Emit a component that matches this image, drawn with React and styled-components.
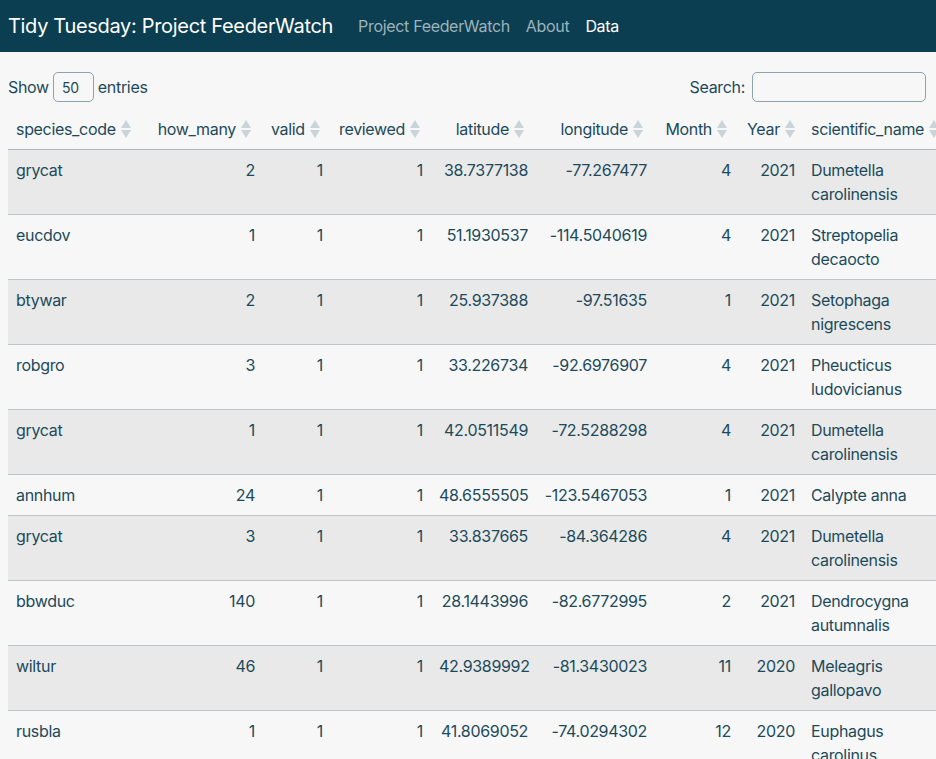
import React from 'react'
import styled, { createGlobalStyle } from 'styled-components'

const GlobalStyle = createGlobalStyle`
  html, body {
    margin: 0;
    padding: 0;
    background: #f7f7f7;
    overflow: hidden;
  }
  body {
    font-family: Inter, "Open Sans", sans-serif;
    color: #1c4a5b;
    font-size: 16px;
    letter-spacing: -0.02em;
  }
`

const columns = [
  { key: 'species_code', width: 139 },
  { key: 'how_many', width: 116, num: true },
  { key: 'valid', width: 68, num: true },
  { key: 'reviewed', width: 100, num: true },
  { key: 'latitude', width: 105, num: true },
  { key: 'longitude', width: 119, num: true },
  { key: 'Month', width: 84, num: true },
  { key: 'Year', width: 64, num: true },
  { key: 'scientific_name', width: 146 },
]

const rows = [
  ['grycat', 2, 1, 1, '38.7377138', '-77.267477', 4, 2021, 'Dumetella carolinensis'],
  ['eucdov', 1, 1, 1, '51.1930537', '-114.5040619', 4, 2021, 'Streptopelia decaocto'],
  ['btywar', 2, 1, 1, '25.937388', '-97.51635', 1, 2021, 'Setophaga nigrescens'],
  ['robgro', 3, 1, 1, '33.226734', '-92.6976907', 4, 2021, 'Pheucticus ludovicianus'],
  ['grycat', 1, 1, 1, '42.0511549', '-72.5288298', 4, 2021, 'Dumetella carolinensis'],
  ['annhum', 24, 1, 1, '48.6555505', '-123.5467053', 1, 2021, 'Calypte anna'],
  ['grycat', 3, 1, 1, '33.837665', '-84.364286', 4, 2021, 'Dumetella carolinensis'],
  ['bbwduc', 140, 1, 1, '28.1443996', '-82.6772995', 2, 2021, 'Dendrocygna autumnalis'],
  ['wiltur', 46, 1, 1, '42.9389992', '-81.3430023', 11, 2020, 'Meleagris gallopavo'],
  ['rusbla', 1, 1, 1, '41.8069052', '-74.0294302', 12, 2020, 'Euphagus carolinus'],
]

const SortIcon = () => (
  <SortSvg width="10" height="18" viewBox="0 0 10 18">
    <path d="M5 0 L10 8 L0 8 Z" fill="#c9d4d9" />
    <path d="M0 10 L10 10 L5 18 Z" fill="#c9d4d9" />
  </SortSvg>
)

const App = () => {
  return (
    <>
      <GlobalStyle />
      <Navbar>
        <Brand>Tidy Tuesday: Project FeederWatch</Brand>
        <NavLink>Project FeederWatch</NavLink>
        <NavLink>About</NavLink>
        <NavLink active>Data</NavLink>
      </Navbar>
      <Main>
        <Controls>
          <Label>
            Show <Select>50</Select> entries
          </Label>
          <Label>
            Search:<SearchBox />
          </Label>
        </Controls>
        <Table>
          <colgroup>
            {columns.map((c) => (
              <col key={c.key} style={{ width: c.width }} />
            ))}
          </colgroup>
          <thead>
            <tr>
              {columns.map((c) => (
                <Th key={c.key} num={c.num}>
                  <HeadInner num={c.num}>
                    {c.key}
                    <SortIcon />
                  </HeadInner>
                </Th>
              ))}
            </tr>
          </thead>
          <tbody>
            {rows.map((r, i) => (
              <Tr key={i} striped={i % 2 === 0}>
                {r.map((v, j) => (
                  <Td key={j} num={columns[j].num}>
                    {v}
                  </Td>
                ))}
              </Tr>
            ))}
          </tbody>
        </Table>
      </Main>
    </>
  )
}

export default App

const Navbar = styled.nav`
  height: 52px;
  background: #0b3e50;
  display: flex;
  align-items: center;
  padding: 0 8px;
`

const Brand = styled.div`
  color: #ffffff;
  font-size: 20px;
  margin-right: 17px;
  white-space: nowrap;
`

const NavLink = styled.a`
  color: ${(p) => (p.active ? '#ffffff' : '#9db3bb')};
  font-size: 16px;
  padding: 0 8px;
  white-space: nowrap;
  cursor: pointer;
`

const Main = styled.div`
  padding: 0 10px 0 8px;
`

const Controls = styled.div`
  display: flex;
  justify-content: space-between;
  align-items: center;
  height: 30px;
  margin-top: 20px;
  margin-bottom: 7px;
`

const Label = styled.label`
  display: flex;
  align-items: center;
  gap: 4px;
  font-size: 16px;
  & > input {
    margin-left: 3px;
  }
`

const Select = styled.div`
  width: 41px;
  height: 30px;
  box-sizing: border-box;
  border: 1px solid #8ea3ad;
  border-radius: 5px;
  display: flex;
  align-items: center;
  justify-content: center;
  font-size: 14px;
  padding-right: 6px;
`

const SearchBox = styled.input`
  width: 174px;
  height: 30px;
  box-sizing: border-box;
  border: 1px solid #8ea3ad;
  border-radius: 5px;
  background: transparent;
  outline: none;
`

const Table = styled.table`
  table-layout: fixed;
  border-collapse: collapse;
  width: 941px;
`

const Th = styled.th`
  font-weight: 400;
  padding: 8px;
  line-height: 24px;
  text-align: ${(p) => (p.num ? 'right' : 'left')};
  border-bottom: 1px solid #a9b7bf;
  white-space: nowrap;
`

const HeadInner = styled.span`
  display: inline-flex;
  align-items: center;
  gap: 5px;
  ${(p) => (p.num ? 'margin-right: 4px;' : '')}
`

const SortSvg = styled.svg`
  flex-shrink: 0;
`

const Tr = styled.tr`
  background: ${(p) => (p.striped ? '#e9e9e9' : 'transparent')};
`

const Td = styled.td`
  padding: 8px;
  line-height: 24px;
  vertical-align: top;
  text-align: ${(p) => (p.num ? 'right' : 'left')};
  border-bottom: 1px solid #bac5cc;
`
